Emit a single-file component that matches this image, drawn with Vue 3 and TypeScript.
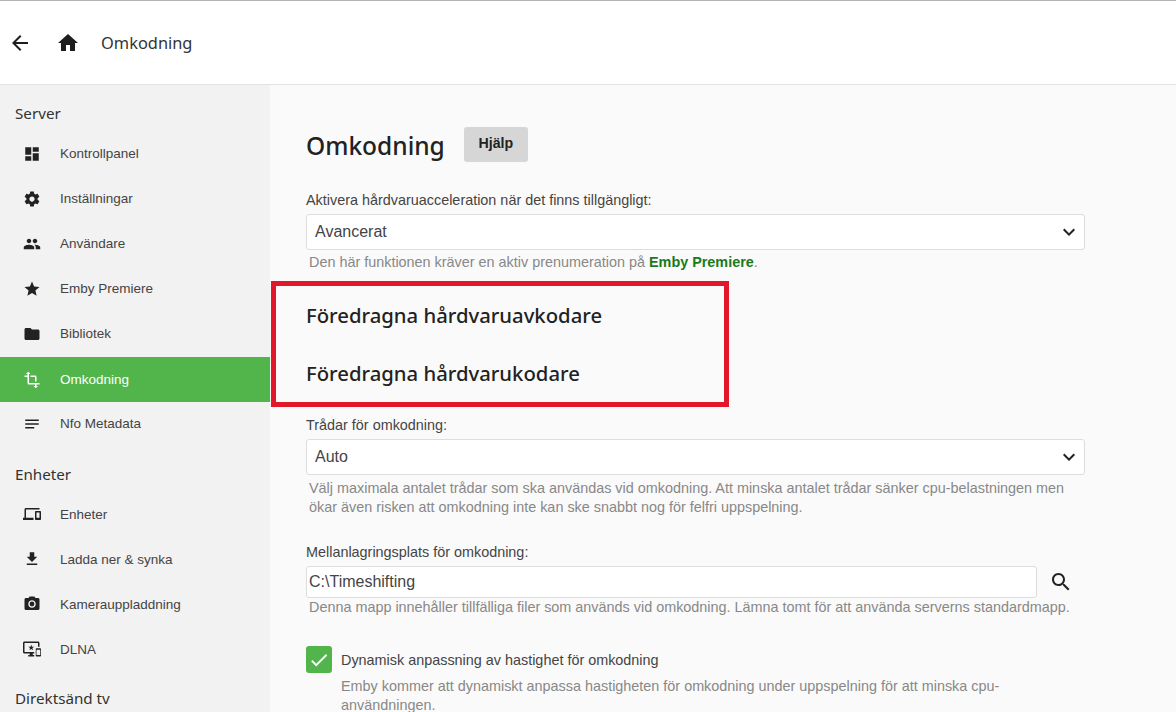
<script setup lang="ts">
interface NavItem { label: string; paths: string[]; active?: boolean }
interface NavGroup { title: string; items: NavItem[] }

const groups: NavGroup[] = [
  { title: 'Server', items: [
    { label: 'Kontrollpanel', paths: ['M3 13h8V3H3v10zm0 8h8v-6H3v6zm10 0h8V11h-8v10zm0-18v6h8V3h-8z'] },
    { label: 'Inställningar', paths: ['M19.43 12.98c.04-.32.07-.64.07-.98s-.03-.66-.07-.98l2.11-1.65c.19-.15.24-.42.12-.64l-2-3.46c-.12-.22-.39-.3-.61-.22l-2.49 1c-.52-.4-1.08-.73-1.69-.98l-.38-2.65C14.46 2.18 14.25 2 14 2h-4c-.25 0-.46.18-.49.42l-.38 2.65c-.61.25-1.17.59-1.69.98l-2.49-1c-.23-.09-.49 0-.61.22l-2 3.46c-.13.22-.07.49.12.64l2.11 1.65c-.04.32-.07.65-.07.98s.03.66.07.98l-2.11 1.65c-.19.15-.24.42-.12.64l2 3.46c.12.22.39.3.61.22l2.49-1c.52.4 1.08.73 1.69.98l.38 2.65c.03.24.24.42.49.42h4c.25 0 .46-.18.49-.42l.38-2.65c.61-.25 1.17-.59 1.69-.98l2.49 1c.23.09.49 0 .61-.22l2-3.46c.12-.22.07-.49-.12-.64l-2.11-1.65zM12 15.5c-1.93 0-3.5-1.57-3.5-3.5s1.57-3.5 3.5-3.5 3.5 1.57 3.5 3.5-1.57 3.5-3.5 3.5z'] },
    { label: 'Användare', paths: ['M16 11c1.66 0 2.99-1.34 2.99-3S17.66 5 16 5c-1.66 0-3 1.34-3 3s1.34 3 3 3zm-8 0c1.66 0 2.99-1.34 2.99-3S9.66 5 8 5C6.34 5 5 6.34 5 8s1.34 3 3 3zm0 2c-2.33 0-7 1.17-7 3.5V19h14v-2.5c0-2.33-4.67-3.5-7-3.5zm8 0c-.29 0-.62.02-.97.05 1.16.84 1.97 1.97 1.97 3.45V19h6v-2.5c0-2.33-4.67-3.5-7-3.5z'] },
    { label: 'Emby Premiere', paths: ['M12 17.27L18.18 21l-1.64-7.03L22 9.24l-7.19-.61L12 2 9.19 8.63 2 9.24l5.46 4.73L5.82 21z'] },
    { label: 'Bibliotek', paths: ['M10 4H4c-1.1 0-1.99.9-1.99 2L2 18c0 1.1.9 2 2 2h16c1.1 0 2-.9 2-2V8c0-1.1-.9-2-2-2h-8l-2-2z'] },
    { label: 'Omkodning', active: true, paths: ['M22 18v-2H8V4h2L7 1 4 4h2v2H2v2h4v8c0 1.1.9 2 2 2h8v2h-2l3 3 3-3h-2v-2h4zM10 8h6v6h2V8c0-1.1-.9-2-2-2h-6v2z'] },
    { label: 'Nfo Metadata', paths: ['M3 18h12v-2H3v2zM3 6v2h18V6H3zm0 7h18v-2H3v2z'] },
  ] },
  { title: 'Enheter', items: [
    { label: 'Enheter', paths: ['M4 6h18V4H4c-1.1 0-2 .9-2 2v11H0v3h14v-3H4V6zm19 2h-6c-.55 0-1 .45-1 1v10c0 .55.45 1 1 1h6c.55 0 1-.45 1-1V9c0-.55-.45-1-1-1zm-1 9h-4v-7h4v7z'] },
    { label: 'Ladda ner & synka', paths: ['M19 9h-4V3H9v6H5l7 7 7-7zM5 18v2h14v-2H5z'] },
    { label: 'Kamerauppladdning', paths: ['M12 8.8a3.2 3.2 0 1 0 0 6.4 3.2 3.2 0 0 0 0-6.4z', 'M9 2L7.17 4H4c-1.1 0-2 .9-2 2v12c0 1.1.9 2 2 2h16c1.1 0 2-.9 2-2V6c0-1.1-.9-2-2-2h-3.17L15 2H9zm3 15c-2.76 0-5-2.24-5-5s2.24-5 5-5 5 2.24 5 5-2.24 5-5 5z'] },
    { label: 'DLNA', paths: ['M23 11.01L18 11c-.55 0-1 .45-1 1v9c0 .55.45 1 1 1h5c.55 0 1-.45 1-1v-9c0-.55-.45-.99-1-.99zM23 20h-5v-7h5v7zM20 2H2C.89 2 0 2.89 0 4v12c0 1.1.89 2 2 2h7v2H7v2h8v-2h-2v-2h2v-2H2V4h18v5h2V4c0-1.11-.9-2-2-2zm-8.03 7L11 6l-.97 3H7l2.47 1.76-.94 2.91 2.47-1.8 2.47 1.8-.94-2.91L15 9h-3.03z'] },
  ] },
  { title: 'Direktsänd tv', items: [] },
]
</script>

<template>
  <div class="app">
    <header class="topbar">
      <svg class="back" viewBox="0 0 24 24"><path d="M20 11H7.83l5.59-5.59L12 4l-8 8 8 8 1.41-1.41L7.83 13H20v-2z" /></svg>
      <svg class="home" viewBox="0 0 24 24"><path d="M10 20v-6h4v6h5v-8h3L12 3 2 12h3v8z" /></svg>
      <span class="top-title">Omkodning</span>
    </header>
    <div class="body">
      <nav class="sidebar">
        <section v-for="g in groups" :key="g.title" class="group">
          <h3 class="group-title">{{ g.title }}</h3>
          <a v-for="i in g.items" :key="i.label" class="nav-item" :class="{ active: i.active }">
            <svg class="nav-icon" viewBox="0 0 24 24"><path v-for="p in i.paths" :key="p" :d="p" /></svg>
            <span class="nav-label">{{ i.label }}</span>
          </a>
        </section>
      </nav>
      <main class="content">
        <div class="title-row">
          <h1 class="page-title">Omkodning</h1>
          <button class="help">Hjälp</button>
        </div>

        <label class="field-label">Aktivera hårdvaruacceleration när det finns tillgängligt:</label>
        <div class="select">
          <span>Avancerat</span>
          <svg class="chev" viewBox="0 0 24 24"><path d="M16.59 8.59L12 13.17 7.41 8.59 6 10l6 6 6-6z" /></svg>
        </div>
        <p class="hint first-hint">Den här funktionen kräver en aktiv prenumeration på <b class="premiere">Emby Premiere</b>.</p>

        <h2 class="sub sub-a">Föredragna hårdvaruavkodare</h2>
        <h2 class="sub sub-b">Föredragna hårdvarukodare</h2>

        <label class="field-label threads">Trådar för omkodning:</label>
        <div class="select">
          <span>Auto</span>
          <svg class="chev" viewBox="0 0 24 24"><path d="M16.59 8.59L12 13.17 7.41 8.59 6 10l6 6 6-6z" /></svg>
        </div>
        <p class="hint">Välj maximala antalet trådar som ska användas vid omkodning. Att minska antalet trådar sänker cpu-belastningen men ökar även risken att omkodning inte kan ske snabbt nog för felfri uppspelning.</p>

        <label class="field-label temp">Mellanlagringsplats för omkodning:</label>
        <div class="path-row">
          <div class="input">C:\Timeshifting</div>
          <svg class="search" viewBox="0 0 24 24"><path d="M15.5 14h-.79l-.28-.27C15.41 12.59 16 11.11 16 9.5 16 5.91 13.09 3 9.5 3S3 5.91 3 9.5 5.91 16 9.5 16c1.61 0 3.09-.59 4.23-1.57l.27.28v.79l5 4.99L20.49 19l-4.99-5zm-6 0C7.01 14 5 11.99 5 9.5S7.01 5 9.5 5 14 7.01 14 9.5 11.99 14 9.5 14z" /></svg>
        </div>
        <p class="hint path-hint">Denna mapp innehåller tillfälliga filer som används vid omkodning. Lämna tomt för att använda serverns standardmapp.</p>

        <div class="check-row">
          <span class="check"><svg viewBox="0 0 24 24"><path d="M9 16.17L4.83 12l-1.42 1.41L9 19 21 7l-1.41-1.41z" /></svg></span>
          <div class="check-text">
            <div class="check-label">Dynamisk anpassning av hastighet för omkodning</div>
            <p class="hint check-hint">Emby kommer att dynamiskt anpassa hastigheten för omkodning under uppspelning för att minska cpu-användningen.</p>
          </div>
        </div>
      </main>
    </div>
    <div class="annotation"></div>
  </div>
</template>

<style>
html, body { margin: 0; padding: 0; overflow: hidden; }
</style>

<style scoped>
.app {
  position: relative;
  width: 1176px;
  height: 712px;
  overflow: hidden;
  display: flex;
  flex-direction: column;
  background: #fafafa;
  font-family: "Liberation Sans", Arial, sans-serif;
  color: #222;
}
.topbar {
  flex: none;
  box-sizing: border-box;
  height: 85px;
  display: flex;
  align-items: center;
  background: #fff;
  border-top: 1px solid #b5b5b5;
  border-bottom: 1px solid #e2e2e2;
  padding-left: 8px;
}
.topbar svg { fill: #1e1e1e; }
.back { width: 24px; height: 24px; }
.home { width: 24px; height: 24px; margin-left: 24px; }
.top-title {
  margin-left: 21px;
  font-family: "Noto Sans", sans-serif;
  font-size: 16.4px;
  color: #333;
}
.body { flex: 1; display: flex; min-height: 0; }
.sidebar {
  flex: none;
  width: 270px;
  background: #f2f2f2;
  padding-top: 16px;
}
.group { margin-bottom: 15px; }
.group:first-child { margin-bottom: 16px; }
.group-title {
  margin: 0 0 5px 15px;
  height: 24px;
  line-height: 24px;
  font-family: "Noto Sans", sans-serif;
  font-size: 15.2px;
  font-weight: 400;
  color: #333;
}
.group:first-child .group-title { margin-bottom: 6px; }
.nav-item {
  height: 45px;
  display: flex;
  align-items: center;
  padding-left: 23px;
  font-size: 13.5px;
  color: #444;
}
.nav-label { margin-top: 1px; }
.group:first-child .nav-label { margin-top: -1px; }
.nav-item.active { background: #52b54b; color: #fff; margin-top: 1px; margin-bottom: -1px; }
.nav-icon { width: 18px; height: 18px; margin-right: 19px; fill: #222; }
.nav-item.active .nav-icon { fill: #fff; }
.content {
  flex: 1;
  min-width: 0;
  padding: 42px 0 0 36px;
}
.title-row { display: flex; align-items: flex-start; height: 35px; }
.page-title {
  margin: 0;
  font-family: "Noto Sans", sans-serif;
  font-size: 24.5px;
  line-height: 38px;
  font-weight: 500;
  color: #222;
}
.help {
  margin-left: 19px;
  width: 64px;
  height: 35px;
  border: 0;
  border-radius: 3px;
  background: #d6d6d6;
  font-family: "Liberation Sans", sans-serif;
  font-size: 14.2px;
  font-weight: 700;
  color: #222;
  padding: 0 0 3px;
}
.field-label {
  display: block;
  width: 779px;
  margin-top: 29px;
  font-size: 14.4px;
  line-height: 18px;
  color: #444;
}
.threads { margin-top: 0; }
.temp { margin-top: 26px; }
.select {
  box-sizing: border-box;
  width: 779px;
  height: 36px;
  margin-top: 5px;
  padding: 0 8px;
  display: flex;
  align-items: center;
  justify-content: space-between;
  background: #fff;
  border: 1px solid #ddd;
  border-radius: 3px;
  font-size: 16px;
  color: #444;
}
.chev { width: 24px; height: 24px; fill: #222; margin-right: -5px; }
.hint {
  width: 779px;
  margin: 4px 0 0;
  padding-left: 3px;
  box-sizing: border-box;
  font-size: 14.4px;
  line-height: 19px;
  color: #888;
}
.first-hint { margin-top: 3px; }
.path-hint { margin-top: 0; }
.premiere { color: #1a7a1a; }
.sub {
  margin: 0;
  font-family: "Noto Sans", sans-serif;
  font-size: 20.3px;
  line-height: 28px;
  font-weight: 500;
  color: #222;
}
.sub-a { margin-top: 29px; }
.sub-b { margin-top: 30px; margin-bottom: 29px; }
.path-row { display: flex; align-items: center; margin-top: 5px; }
.input {
  box-sizing: border-box;
  width: 731px;
  height: 32px;
  line-height: 30px;
  padding-left: 2px;
  background: #fff;
  border: 1px solid #ddd;
  border-radius: 3px;
  font-size: 16px;
  color: #444;
}
.search { width: 24px; height: 24px; margin-left: 12px; fill: #222; }
.check-row { display: flex; margin-top: 29px; }
.check {
  flex: none;
  width: 26px;
  height: 27px;
  border-radius: 3px;
  background: #52b54b;
  display: flex;
  align-items: center;
  justify-content: center;
}
.check svg { width: 22px; height: 22px; fill: #fff; }
.check-text { margin-left: 9px; width: 680px; padding-top: 1px; }
.check-label { font-size: 14.4px; line-height: 27px; color: #444; }
.check-hint { padding-left: 0; width: 680px; margin-top: 3px; }
.annotation {
  position: absolute;
  left: 271px;
  top: 281px;
  width: 458px;
  height: 126px;
  box-sizing: border-box;
  border: 5px solid #e3172a;
}
</style>
